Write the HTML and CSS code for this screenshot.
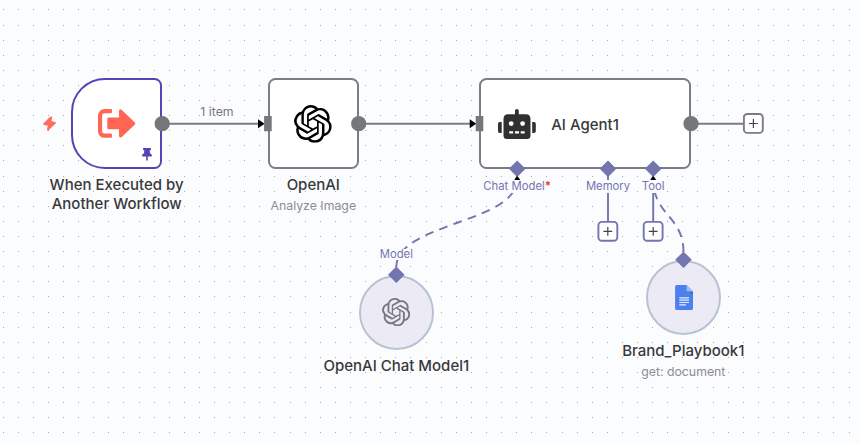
FILE: index.html
```html
<!DOCTYPE html>
<html lang="en">
<head>
<meta charset="utf-8">
<title>Workflow canvas</title>
<link rel="stylesheet" href="styles.css">
</head>
<body>
<svg class="defs" width="0" height="0">
  <symbol id="openai" viewBox="0 0 24 24"><path fill="currentColor" d="M22.2819 9.8211a5.9847 5.9847 0 0 0-.5157-4.9108 6.0462 6.0462 0 0 0-6.5098-2.9A6.0651 6.0651 0 0 0 4.9807 4.1818a5.9847 5.9847 0 0 0-3.9977 2.9 6.0462 6.0462 0 0 0 .7427 7.0966 5.98 5.98 0 0 0 .511 4.9107 6.051 6.051 0 0 0 6.5146 2.9001A5.9847 5.9847 0 0 0 13.2599 24a6.0557 6.0557 0 0 0 5.7718-4.2058 5.9894 5.9894 0 0 0 3.9977-2.9001 6.0557 6.0557 0 0 0-.7475-7.0729zm-9.022 12.6081a4.4755 4.4755 0 0 1-2.8764-1.0408l.1419-.0804 4.7783-2.7582a.7948.7948 0 0 0 .3927-.6813v-6.7369l2.02 1.1686a.071.071 0 0 1 .038.052v5.5826a4.504 4.504 0 0 1-4.4945 4.4944zm-9.6607-4.1254a4.4708 4.4708 0 0 1-.5346-3.0137l.142.0852 4.783 2.7582a.7712.7712 0 0 0 .7806 0l5.8428-3.3685v2.3324a.0804.0804 0 0 1-.0332.0615L9.74 19.9502a4.4992 4.4992 0 0 1-6.1408-1.6464zM2.3408 7.8956a4.485 4.485 0 0 1 2.3655-1.9728V11.6a.7664.7664 0 0 0 .3879.6765l5.8144 3.3543-2.0201 1.1685a.0757.0757 0 0 1-.071 0l-4.8303-2.7865A4.504 4.504 0 0 1 2.3408 7.872zm16.5963 3.8558L13.1038 8.364 15.1192 7.2a.0757.0757 0 0 1 .071 0l4.8303 2.7913a4.4944 4.4944 0 0 1-.6765 8.1042v-5.6772a.79.79 0 0 0-.407-.667zm2.0107-3.0231l-.142-.0852-4.7735-2.7818a.7759.7759 0 0 0-.7854 0L9.409 9.2297V6.8974a.0662.0662 0 0 1 .0284-.0615l4.8303-2.7866a4.4992 4.4992 0 0 1 6.6802 4.66zM8.3065 12.863l-2.02-1.1638a.0804.0804 0 0 1-.038-.0567V6.0742a4.4992 4.4992 0 0 1 7.3757-3.4537l-.142.0805L8.704 5.459a.7948.7948 0 0 0-.3927.6813zm1.0976-2.3654l2.602-1.4998 2.6069 1.4998v2.9994l-2.5974 1.4997-2.6067-1.4997Z"/></symbol>
</svg>
<main class="canvas">
  <svg class="layer" width="860" height="444">
    <path id="grid" class="grid"/>
    <g class="edges">
      <path d="M162 123.7H262M358.7 123.7H473M691 123.7H743"/>
    </g>
    <g class="edges sub">
      <path d="M608 170V221M653.2 170V221"/>
      <path class="dashed" d="M396.3 267C396.3 223 517.2 223 517.2 179"/>
      <path class="dashed" d="M683.5 252C683.5 215.5 653.2 215.5 653.2 179"/>
    </g>
    <path class="arrow" d="M258 119.2l6.6 4.5-6.6 4.5zM469.7 119.2l6.6 4.5-6.6 4.5zM513.5 181l3.7-5.5 3.7 5.5zM649.5 181l3.7-5.5 3.7 5.5z"/>
  </svg>

  <svg class="bolt" viewBox="0 0 13 15"><path d="M7.700 1.200.900 8 5.600 9.300 4.800 13.900 12.100 6.900 7.700 5.600 8.300 1.300z"/></svg>

  <section class="node trigger">
    <svg class="icon exit" viewBox="0 0 38 29"><path d="M12.700 0H6.500A6.500 6.500 0 0 0 0 6.500V22.300A6.500 6.500 0 0 0 6.500 28.800H12.700Q14.100 28.800 14.100 27.400V26Q14.100 24.600 12.700 24.600H6.500Q4.100 24.600 4.100 22.300V6.500Q4.100 4.200 6.500 4.200H12.700Q14.100 4.200 14.100 2.800V1.400Q14.100 0 12.700 0z"/><path d="M10.900 8.500H21V2Q21 .2 22.300.2 23.100.2 23.800.9L36.900 13.400Q37.900 14.400 36.900 15.400L23.800 27.900Q23.100 28.600 22.300 28.600 21 28.600 21 26.800V20.300H10.900Q9.300 20.300 9.300 18.700V10.100Q9.300 8.500 10.900 8.500z"/></svg>
    <svg class="pin" viewBox="0 0 10 13"><path d="M1.700 0H8.300Q9 0 9 .8V1.500Q9 2.200 8.300 2.200H7.700L8 5.200Q9.900 6.200 10 7.600 10 8.400 9.300 8.400H5.800V12L5 13 4.200 12V8.400H.7Q0 8.400 0 7.600 .1 6.200 2 5.200L2.300 2.200H1.700Q1 2.200 1 1.500V.8Q1 0 1.700 0z"/></svg>
  </section>
  <section class="node openai"><svg class="icon logo"><use href="#openai"/></svg></section>
  <section class="node agent">
    <svg class="icon robot" viewBox="0 0 38 30"><path fill-rule="evenodd" d="M18.900 0A1.900 1.900 0 0 1 20.800 1.900V5.300H28Q32.500 5.500 32.500 10V26.500Q32.500 30 29 30H9Q5.500 30 5.500 26.500V10Q5.500 5.500 10 5.300H17V1.900A1.900 1.900 0 0 1 18.900 0zM13.200 12.200a2.400 2.400 0 1 0 0 4.800 2.400 2.400 0 0 0 0-4.800zM24.600 12.200a2.400 2.400 0 1 0 0 4.800 2.400 2.400 0 0 0 0-4.800zM11.200 22.200v2.200h4v-2.200zM17 22.200v2.200h4v-2.200zM22.700 22.200v2.200h4v-2.200zM3.700 13V24H1.800Q0 24 0 22.200V14.800Q0 13 1.800 13zM34.200 13V24H36Q37.800 24 37.800 22.200V14.800Q37.800 13 36 13z"/></svg>
    <h2 class="agent-name">AI Agent1</h2>
  </section>
  <section class="node round model"><svg class="icon logo-small"><use href="#openai"/></svg></section>
  <section class="node round doc">
    <svg class="icon gdoc" viewBox="0 0 18 25"><path fill="#4b80ee" d="M1.600 0H11.500L18 6.500V23.400Q18 25 16.400 25H1.600Q0 25 0 23.400V1.600Q0 0 1.600 0z"/><path fill="#3a62c4" d="M12.300 6.300 18 9V6.500z"/><path fill="#9cbcfa" d="M11.500 0 18 6.600H13Q11.500 6.600 11.500 5z"/><path fill="#e8effd" d="M4.200 12.300h9.700v1.200H4.200zM4.200 14.600h9.700v1.200H4.200zM4.200 16.900h9.700v1.200H4.200zM4.200 19.200h6.700v1.200H4.200z"/></svg>
  </section>

  <svg class="layer" width="860" height="444">
    <g class="port"><circle cx="162.200" cy="123.700" r="7.600"/><circle cx="358.700" cy="123.700" r="7.600"/><circle cx="691" cy="123.700" r="7.600"/><path d="M264.100 116.100h7.600v15.200h-7.600zM475.700 116.100h7.600v15.200h-7.600z"/></g>
    <path class="diamond" d="M517.200 160.500l8.300 8.300-8.300 8.300-8.300-8.300zM608 160.500l8.300 8.300-8.300 8.300-8.300-8.300zM653.200 160.500l8.300 8.300-8.300 8.300-8.300-8.300zM396.300 266.500l8.300 8.300-8.300 8.300-8.300-8.300zM683.500 251.500l8.300 8.300-8.300 8.300-8.300-8.300z"/>
    <g class="add"><rect x="743.900" y="114" width="18.900" height="18.900" rx="3.500"/><path d="M749 123.500h8.800M753.400 119.100v8.800"/></g>
    <g class="add sub"><rect x="598.400" y="221.900" width="18.900" height="18.900" rx="3.500"/><path d="M603.400 231.400h8.800M607.800 227v8.800"/></g>
    <g class="add sub"><rect x="643.700" y="221.900" width="18.900" height="18.900" rx="3.500"/><path d="M648.800 231.400h8.800M653.200 227v8.800"/></g>
  </svg>

  <div class="caption c-trigger"><h2>When Executed by<br>Another Workflow</h2></div>
  <div class="caption c-openai"><h2>OpenAI</h2><p>Analyze Image</p></div>
  <div class="caption c-model"><h2>OpenAI Chat Model1</h2></div>
  <div class="caption c-doc"><h2>Brand_Playbook1</h2><p>get: document</p></div>
  <span class="tag count">1 item</span>
  <span class="tag t-chat">Chat Model<b>*</b></span>
  <span class="tag t-memory">Memory</span>
  <span class="tag t-tool">Tool</span>
  <span class="tag t-model">Model</span>
</main>
<script src="grid.js"></script>
</body>
</html>
```
FILE: styles.css
```css
* { box-sizing: border-box; }
body { margin: 0; font-family: Inter, sans-serif; }
h2, p { margin: 0; }
.defs { position: absolute; }
.canvas { position: relative; width: 860px; height: 444px; overflow: hidden; background: #fbfcfe; }
.layer { position: absolute; left: 0; top: 0; }
.grid { fill: #a6a7a9; shape-rendering: crispEdges; }
.edges { fill: none; stroke: #7b7d82; stroke-width: 1.9; }
.edges.sub { stroke: #7275ae; }
.dashed { stroke-dasharray: 8.800 6.300; }
.arrow { fill: #000; }
.port { fill: #74777c; }
.diamond { fill: #7275ae; }
.add rect { fill: #fff; stroke: #7b7d82; stroke-width: 1.9; }
.add.sub rect { stroke: #7275ae; }
.add path { stroke: #444; stroke-width: 1.2; fill: none; }

.node { position: absolute; top: 78.400px; height: 90.600px; display: flex; align-items: center; justify-content: center; background: #fff; border: 2px solid #7b7d82; border-radius: 7.500px; }
.trigger { left: 71.400px; width: 90.600px; border-color: #5644b5; border-radius: 34px 7.500px 7.500px 34px; }
.openai { left: 268px; width: 90.600px; }
.agent { left: 479.400px; width: 211.500px; justify-content: flex-start; padding-left: 16.600px; gap: 15.200px; }
.round { width: 75.500px; height: 75.500px; border-radius: 50%; background: #ecebf5; border-color: #b9c1d2; }
.model { left: 358.600px; top: 274.500px; color: #77777f; }
.doc { left: 645.700px; top: 259.500px; }
.icon { display: block; flex: none; }
.exit { width: 38px; height: 29px; fill: #ff6654; }
.logo { width: 37.800px; height: 37.800px; }
.logo-small { width: 28.300px; height: 28.300px; }
.robot { width: 38px; height: 30px; fill: #303030; }
.gdoc { width: 18.200px; height: 25px; margin-left: 1px; }
.pin { position: absolute; right: 8.300px; bottom: 5.500px; width: 10px; height: 13px; fill: #5644b5; }
.bolt { position: absolute; left: 42.500px; top: 115.500px; width: 13px; height: 15px; fill: #ff6e5f; stroke: #ff6e5f; stroke-width: 1.6; stroke-linejoin: round; }

h2 { font-size: 15px; font-weight: 500; line-height: 19px; color: #38393b; }
.agent-name { padding-top: 2px; font-weight: 450; }
.caption { position: absolute; width: 200px; text-align: center; white-space: nowrap; }
.caption p { margin-top: 4px; font-size: 12.300px; line-height: 16px; color: #8b8d92; }
.c-trigger { left: 16.700px; top: 174.500px; }
.c-openai { left: 213.300px; top: 174.500px; }
.c-model { left: 296.300px; top: 355.500px; }
.c-doc { left: 583.300px; top: 340.500px; }
.tag { position: absolute; transform: translateX(-50%); font-size: 11.300px; line-height: 13px; white-space: nowrap; color: #7275ae; background: #fbfcfe; }
.tag b { color: #f0344a; font-weight: 700; }
.count { left: 217px; top: 105px; font-size: 12.300px; color: #77797e; }
.t-chat { left: 517.200px; top: 180px; }
.t-memory { left: 608px; top: 180px; }
.t-tool { left: 653.200px; top: 180px; }
.t-model { left: 396.300px; top: 249px; line-height: 11px; }
```
FILE: grid.js
```js
// Dots sit on whole pixels so that every one stays crisp at this zoom level.
const step = 15.107;
let d = "";
for (let y = 9.9; y < 444; y += step) {
  for (let x = 3.05; x < 860; x += step) {
    d += `M${Math.floor(x)} ${Math.floor(y)}h1v1h-1z`;
  }
}
document.getElementById("grid").setAttribute("d", d);
```
